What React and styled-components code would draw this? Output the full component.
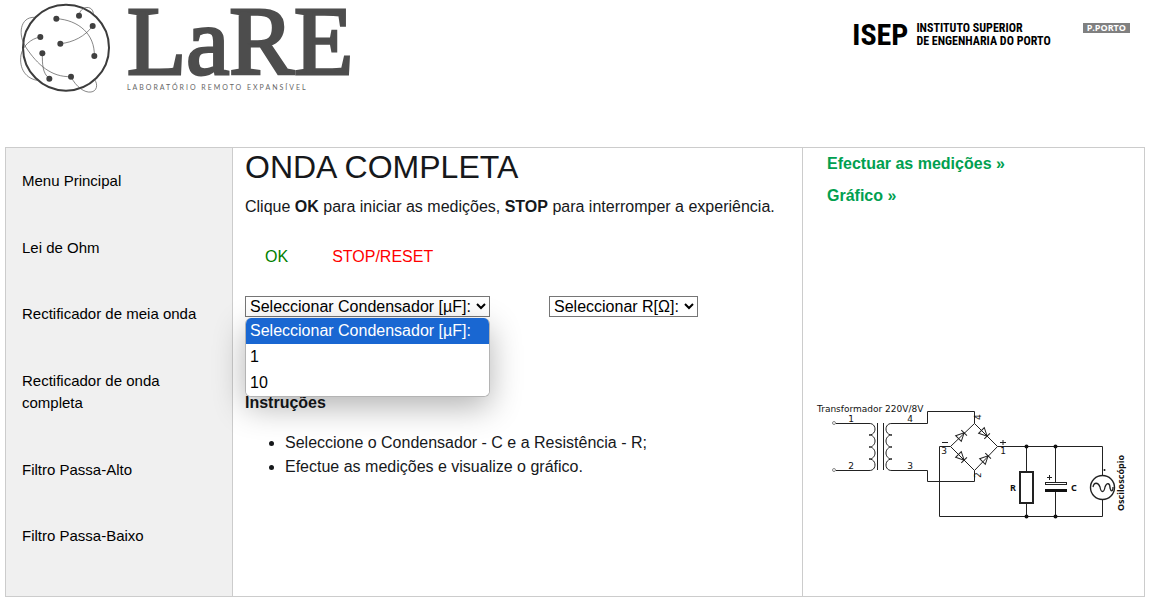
import React from 'react';
import styled, { createGlobalStyle } from 'styled-components';

const GlobalStyle = createGlobalStyle`
  *, *::before, *::after { box-sizing: border-box; }
  body {
    margin: 0;
    background: #fff;
    color: #16181b;
    font-family: "Liberation Sans", Arial, sans-serif;
    font-size: 16px;
    line-height: 24px;
  }
`;

const Page = styled.div`
  padding: 0 12px 0 5px;
`;

const Header = styled.header`
  display: flex;
  justify-content: space-between;
  align-items: flex-start;
  height: 147px;
  padding: 0 15px 0 5px;
`;

const Brand = styled.a`
  display: flex;
  align-items: flex-start;
  color: #4d4d4d;
  text-decoration: none;
`;

const Wordmark = styled.span`
  display: flex;
  flex-direction: column;
  padding: 2px 0 0 7px;
`;

const BrandName = styled.span`
  font-family: "Liberation Serif", serif;
  font-size: 97px;
  line-height: 80px;
  -webkit-text-stroke: 3px #4d4d4d;
`;

const Tagline = styled.span`
  font-family: Lato, sans-serif;
  font-size: 7px;
  font-weight: 400;
  line-height: 10px;
  letter-spacing: 2px;
  color: #666;
  text-transform: uppercase;
`;

const Partners = styled.div`
  display: flex;
  align-items: flex-start;
  gap: 32px;
  padding-top: 20px;
`;

const Institute = styled.div`
  display: flex;
  align-items: center;
  gap: 8px;
  color: #000;
  font-family: "Roboto Condensed", "Liberation Sans Narrow", "Liberation Sans", sans-serif;
  font-weight: 700;
`;

const InstituteInitials = styled.span`
  font-size: 30px;
  line-height: 30px;
`;

const InstituteName = styled.span`
  font-size: 12px;
  line-height: 13px;
  white-space: nowrap;
`;

const PortoTag = styled.span`
  margin-top: 3px;
  padding: 0 4px;
  background: #808080;
  color: #fff;
  font-family: "Open Sans", sans-serif;
  font-size: 9px;
  font-weight: 700;
  line-height: 10px;
`;

const Columns = styled.div`
  display: grid;
  grid-template-columns: minmax(0, 2fr) minmax(0, 5fr) minmax(0, 3fr);
  min-height: 450px;
`;

const Column = styled.div`
  border: 1px solid #ccc;
  border-left: 0;
`;

const Sidebar = styled(Column).attrs({ as: 'nav' })`
  border-left: 1px solid #ccc;
  background: #f0f0f0;
`;

const MenuLink = styled.a`
  display: block;
  padding: 22px 16px;
  color: #000;
  font-size: 15px;
  line-height: 1.5;
  text-decoration: none;
`;

const Content = styled(Column).attrs({ as: 'main' })`
  padding: 0 12px;
`;

const Title = styled.h1`
  margin: 0 0 9px;
  font-size: 32px;
  font-weight: 400;
  line-height: 38px;
`;

const Paragraph = styled.p`
  margin: 0;
`;

const Actions = styled.div`
  display: flex;
  gap: 4px;
  margin: 16px 0 17px;
`;

const ActionButton = styled.button`
  padding: 10px 20px;
  border: 0;
  background: transparent;
  color: ${({ $color }) => $color};
  font: inherit;
`;

const Fields = styled.div`
  display: flex;
  align-items: flex-start;
  gap: 59px;
`;

const Field = styled.div`
  position: relative;
  display: flex;
`;

const Select = styled.select`
  height: 21px;
  padding: 0 2px 0 0;
  border: 1px solid #767676;
  border-radius: 0;
  background: #fff;
  color: #000;
  font: inherit;
  line-height: 18px;
`;

const OptionList = styled.ul`
  position: absolute;
  top: 100%;
  left: 0;
  z-index: 1;
  width: 100%;
  margin: 1px 0 0;
  padding: 0;
  overflow: hidden;
  border: 1px solid #b4b4b4;
  border-top: 0;
  border-radius: 6px;
  background: #fff;
  box-shadow: 0 10px 32px rgba(0, 0, 0, 0.3);
  list-style: none;
`;

const Option = styled.li`
  padding: 0 4px;
  background: ${({ $active }) => ($active ? '#1967d2' : '#fff')};
  color: ${({ $active }) => ($active ? '#fff' : '#000')};
  line-height: 26px;
  white-space: nowrap;
`;

const Subtitle = styled.h2`
  margin: 74px 0 16px;
  font-size: 16px;
  line-height: 24px;
`;

const Steps = styled.ul`
  margin: 0;
  padding-left: 40px;
`;

const Aside = styled(Column).attrs({ as: 'aside' })`
  display: flex;
  flex-direction: column;
  align-items: flex-start;
  gap: 8px;
  padding: 4px 7px 0;
`;

const ResultLink = styled.a`
  margin-left: 17px;
  color: #00a050;
  font-weight: 700;
  text-decoration: none;
`;

const Schematic = styled.svg`
  display: block;
  margin-top: 179px;
  max-width: 100%;
  fill: none;
  stroke: #222;

  text {
    fill: #111;
    stroke: none;
    font-family: "DejaVu Sans", sans-serif;
    font-size: 9px;
  }
  .strong {
    font-family: "Noto Sans", sans-serif;
    font-weight: 700;
  }
  .solid { fill: #111; }
`;

const nodes = [
  [139, 56], [207, 47], [248, 78], [151, 131], [91, 111],
  [97, 160], [253, 168], [183, 230], [118, 236],
];

function Globe() {
  return (
    <svg width="110" height="100" viewBox="0 0 330 300" fill="none" stroke="#4a4a4a" strokeWidth="2" aria-hidden="true">
      <circle cx="168" cy="143" r="129" stroke="#3c3c3c" strokeWidth="6" />
      <path d="M139 56C205 60 255 102 253 168" />
      <path d="M248 78C225 109 190 127 151 131" />
      <path d="M207 47C211 15 250 15 250 42" />
      <path d="M91 111C61 116 38 139 33 165C27 205 46 237 87 242" />
      <path d="M74 52C30 50 22 105 49 144C82 193 123 232 183 230" />
      <path d="M97 160C97 193 97 219 118 236" />
      <path d="M183 230C198 261 224 279 243 276C260 274 265 255 254 239" />
      {nodes.map(([x, y]) => (
        <circle key={`${x}-${y}`} cx={x} cy={y} r="9" fill="#404040" stroke="none" />
      ))}
    </svg>
  );
}

function Diode({ x, y, angle }) {
  return (
    <g transform={`translate(${x} ${y}) rotate(${angle})`}>
      <path d="M-5 -4V4L3 0ZM3 -4V4" />
    </g>
  );
}

function Circuit() {
  return (
    <Schematic width="326" height="130" viewBox="0 0 326 130" role="img" aria-label="Rectificador de onda completa">
      <text x="7" y="17">Transformador 220V/8V</text>
      <circle cx="24" cy="28" r="1.5" stroke="#888" />
      <circle cx="24" cy="75" r="1.5" stroke="#888" />
      <path d="M26 28.5H59M26 75.5H59" />
      <path d="M59 28.5C67 28 67 40 59 40C67 40 67 52 59 52C67 52 67 64 59 64C67 64 67 76 59 75.5" />
      <path d="M67.5 28V75M73.5 28V75" />
      <path d="M82 28.5C74 28 74 40 82 40C74 40 74 52 82 52C74 52 74 64 82 64C74 64 74 76 82 75.5" />
      <path d="M82 28.5H117.5V16.5H164.5V28.5M82 75.5H117.5V86.5H164.5V75.5" />
      <path d="M164.5 28.5L187.5 51.5L164.5 75.5L140.5 51.5Z" />
      <path d="M140.5 51.5H129.5V121.5H292.5V104M187.5 51.5H292.5V80" />
      <Diode x={152} y={40} angle={-45} />
      <Diode x={152} y={63} angle={45} />
      <Diode x={175} y={39} angle={45} />
      <Diode x={176} y={63} angle={-45} />
      <path d="M216.5 51V77M216.5 108V121M245.5 51V87M245.5 97V121" />
      <rect x="210" y="77" width="13" height="31" strokeWidth="2" />
      <rect x="235.5" y="87.5" width="21" height="2" />
      <rect className="solid" x="235" y="94" width="22" height="3" stroke="none" />
      {[[216.5, 51.5], [245.5, 51.5], [216.5, 121.5], [245.5, 121.5]].map(([x, y]) => (
        <circle className="solid" key={`${x}-${y}`} cx={x} cy={y} r="2" stroke="none" />
      ))}
      <circle cx="292.5" cy="92.5" r="12" strokeWidth="1.4" />
      <path d="M283 92C284 87 288 87 290 92C291 98 294 98 295 92C297 87 300 88 300 93C301 97 303 97 303 92" strokeWidth="1.3" />
      <circle className="solid" cx="294.5" cy="75" r="1" stroke="none" />
      <g textAnchor="middle">
        <text x="41" y="27">1</text>
        <text x="41" y="74">2</text>
        <text x="100" y="27">4</text>
        <text x="100" y="74">3</text>
        <text x="134" y="59">3</text>
        <text x="193" y="59">1</text>
        <text x="168" y="25" transform="rotate(-90 168 22)">4</text>
        <text x="168" y="83" transform="rotate(-90 168 80)">2</text>
        <text className="strong" x="203" y="96">R</text>
        <text className="strong" x="264" y="96">C</text>
      </g>
      <path d="M132 47.5H138M190 47.5H196M193 45V50M237 82.5H242M239.5 80V85" />
      <text className="strong" textAnchor="middle" transform="translate(314 88) rotate(-90)">Osciloscópio</text>
    </Schematic>
  );
}

const menu = [
  'Menu Principal',
  'Lei de Ohm',
  'Rectificador de meia onda',
  'Rectificador de onda completa',
  'Filtro Passa-Alto',
  'Filtro Passa-Baixo',
];

const capacitorOptions = ['Seleccionar Condensador [µF]:', '1', '10'];

export default function App() {
  return (
    <>
      <GlobalStyle />
      <Page>
        <Header>
          <Brand href="#">
            <Globe />
            <Wordmark>
              <BrandName>LaRE</BrandName>
              <Tagline>Laboratório Remoto Expansível</Tagline>
            </Wordmark>
          </Brand>
          <Partners>
            <Institute>
              <InstituteInitials>ISEP</InstituteInitials>
              <InstituteName>
                INSTITUTO SUPERIOR
                <br />
                DE ENGENHARIA DO PORTO
              </InstituteName>
            </Institute>
            <PortoTag>P.PORTO</PortoTag>
          </Partners>
        </Header>
        <Columns>
          <Sidebar>
            {menu.map((label) => (
              <MenuLink key={label} href="#">{label}</MenuLink>
            ))}
          </Sidebar>
          <Content>
            <Title>ONDA COMPLETA</Title>
            <Paragraph>
              Clique <b>OK</b> para iniciar as medições, <b>STOP</b> para interromper a experiência.
            </Paragraph>
            <Actions>
              <ActionButton type="button" $color="green">OK</ActionButton>
              <ActionButton type="button" $color="red">STOP/RESET</ActionButton>
            </Actions>
            <Fields>
              <Field>
                <Select aria-label="Condensador" defaultValue={capacitorOptions[0]}>
                  {capacitorOptions.map((option) => (
                    <option key={option}>{option}</option>
                  ))}
                </Select>
                <OptionList role="listbox" aria-label="Condensador">
                  {capacitorOptions.map((option, index) => (
                    <Option key={option} role="option" aria-selected={index === 0} $active={index === 0}>
                      {option}
                    </Option>
                  ))}
                </OptionList>
              </Field>
              <Field>
                <Select aria-label="Resistência">
                  <option>Seleccionar R[Ω]:</option>
                </Select>
              </Field>
            </Fields>
            <Subtitle>Instruções</Subtitle>
            <Steps>
              <li>Seleccione o Condensador - C e a Resistência - R;</li>
              <li>Efectue as medições e visualize o gráfico.</li>
            </Steps>
          </Content>
          <Aside>
            <ResultLink href="#">Efectuar as medições »</ResultLink>
            <ResultLink href="#">Gráfico »</ResultLink>
            <Circuit />
          </Aside>
        </Columns>
      </Page>
    </>
  );
}
